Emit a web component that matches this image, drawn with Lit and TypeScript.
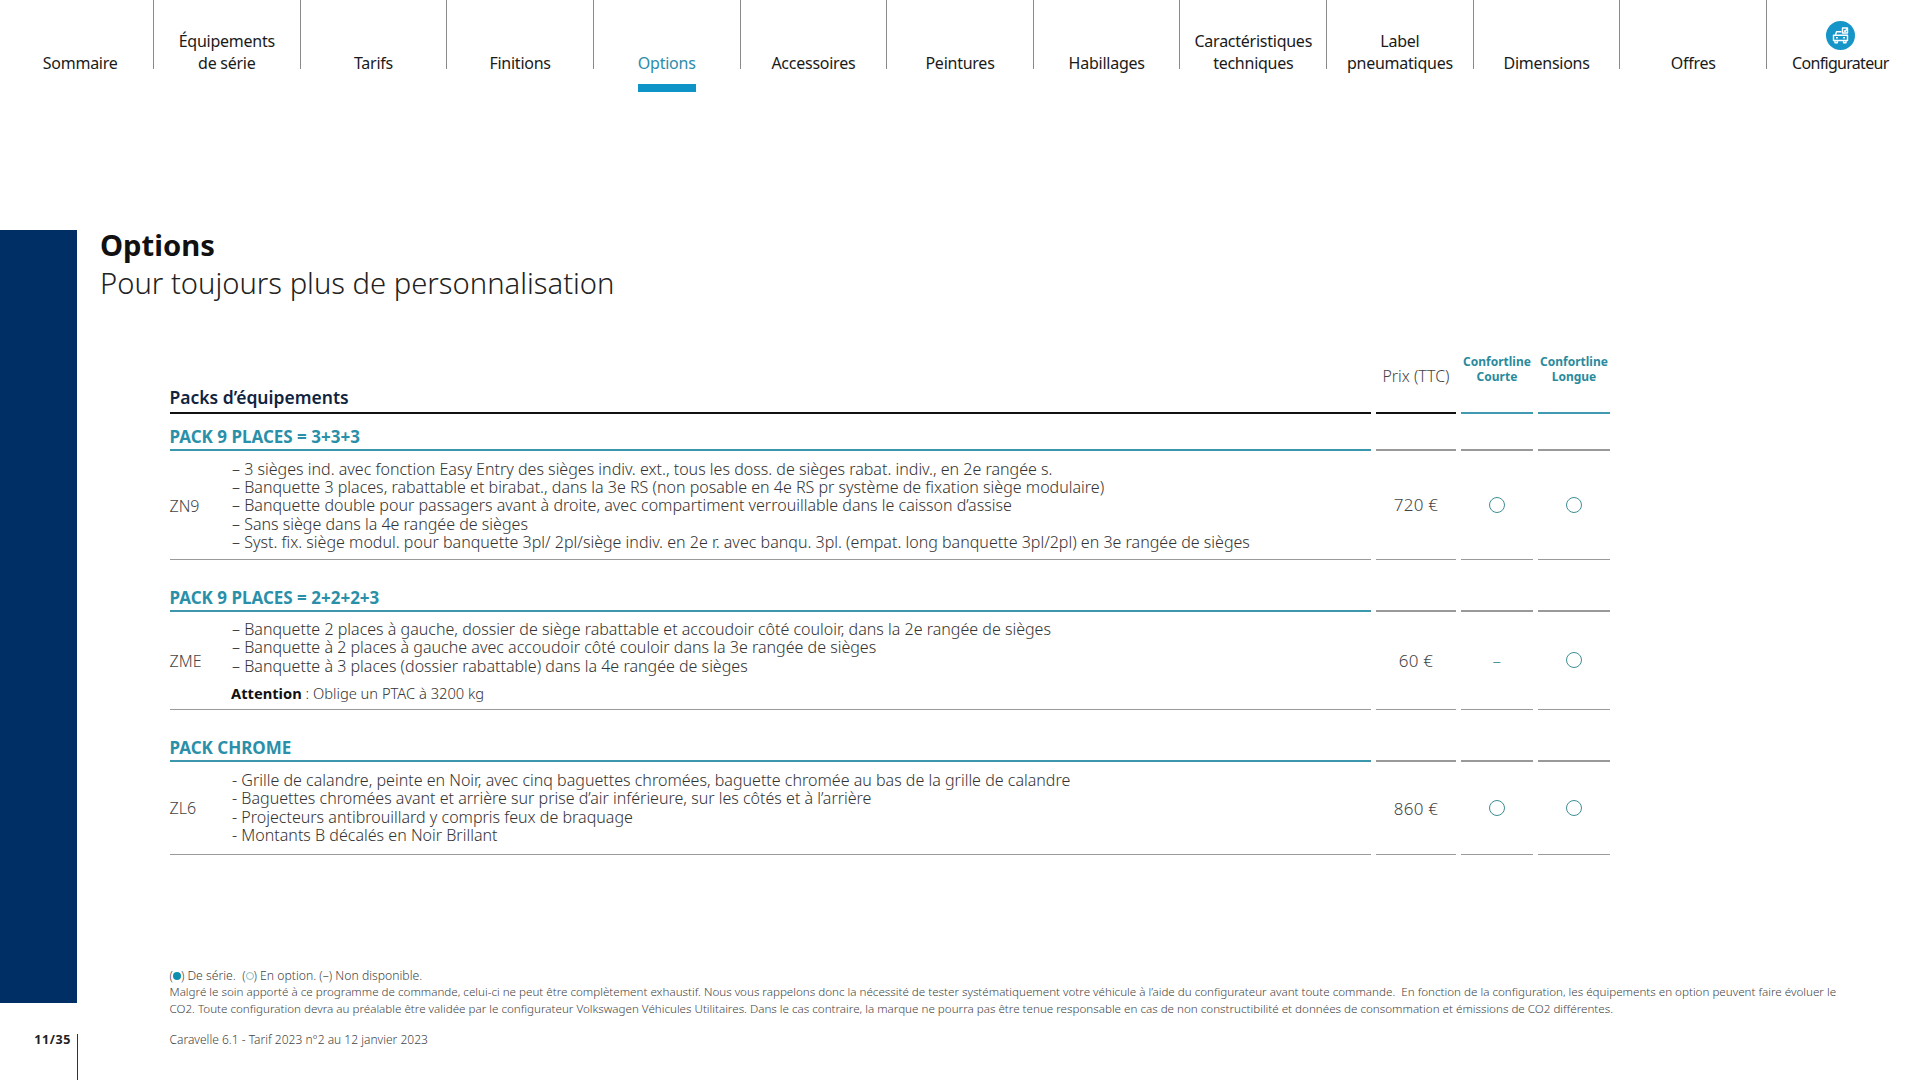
import { LitElement, html, css, nothing } from 'lit';
import { customElement } from 'lit/decorators.js';

const NAV = [
  ['Sommaire'],
  ['Équipements', 'de série'],
  ['Tarifs'],
  ['Finitions'],
  ['Options'],
  ['Accessoires'],
  ['Peintures'],
  ['Habillages'],
  ['Caractéristiques', 'techniques'],
  ['Label', 'pneumatiques'],
  ['Dimensions'],
  ['Offres'],
  ['Configurateur'],
];

type Pack = {
  title: string;
  code: string;
  price: string;
  courte: boolean;
  lines: string[];
  attention?: string;
};

const PACKS: Pack[] = [
  {
    title: 'PACK 9 PLACES = 3+3+3',
    code: 'ZN9',
    price: '720 €',
    courte: true,
    lines: [
      '– 3 sièges ind. avec fonction Easy Entry des sièges indiv. ext., tous les doss. de sièges rabat. indiv., en 2e rangée s.',
      '– Banquette 3 places, rabattable et birabat., dans la 3e RS (non posable en 4e RS pr système de fixation siège modulaire)',
      '– Banquette double pour passagers avant à droite, avec compartiment verrouillable dans le caisson d’assise',
      '– Sans siège dans la 4e rangée de sièges',
      '– Syst. fix. siège modul. pour banquette 3pl/ 2pl/siège indiv. en 2e r. avec banqu. 3pl. (empat. long banquette 3pl/2pl) en 3e rangée de sièges',
    ],
  },
  {
    title: 'PACK 9 PLACES = 2+2+2+3',
    code: 'ZME',
    price: '60 €',
    courte: false,
    lines: [
      '– Banquette 2 places à gauche, dossier de siège rabattable et accoudoir côté couloir, dans la 2e rangée de sièges',
      '– Banquette à 2 places à gauche avec accoudoir côté couloir dans la 3e rangée de sièges',
      '– Banquette à 3 places (dossier rabattable) dans la 4e rangée de sièges',
    ],
    attention: 'Oblige un PTAC à 3200 kg',
  },
  {
    title: 'PACK CHROME',
    code: 'ZL6',
    price: '860 €',
    courte: true,
    lines: [
      '- Grille de calandre, peinte en Noir, avec cinq baguettes chromées, baguette chromée au bas de la grille de calandre',
      '- Baguettes chromées avant et arrière sur prise d’air inférieure, sur les côtés et à l’arrière',
      '- Projecteurs antibrouillard y compris feux de braquage',
      '- Montants B décalés en Noir Brillant',
    ],
  },
];

@customElement('app-root')
export class AppRoot extends LitElement {
  static styles = css`
    :host {
      display: block;
      width: 1920px;
      height: 1080px;
      overflow: hidden;
      background: #fff;
      color: #333;
      font-family: 'Noto Sans', sans-serif;
      font-weight: 300;
    }

    .page {
      display: grid;
      grid-template-columns: 77px 1fr;
      grid-template-rows: 230px 773px 77px;
    }

    nav {
      grid-column: 1 / 3;
      display: grid;
      grid-template-columns: repeat(13, 146.65px);
      align-items: start;
      padding-left: 7.35px;
    }

    .item {
      height: 69px;
      border-right: 1px solid #8a8a8a;
      display: flex;
      flex-direction: column;
      align-items: center;
      justify-content: flex-end;
      font-size: 16px;
      letter-spacing: -0.25px;
      font-weight: 400;
      line-height: 21.5px;
      color: #1a1a1a;
      text-align: center;
      white-space: nowrap;
    }

    .item:last-child {
      border-right: none;
      letter-spacing: -0.7px;
    }

    .label {
      position: relative;
      margin-bottom: -5px;
    }

    .active {
      color: #2b8cab;
    }

    .active .label::after {
      content: '';
      position: absolute;
      left: 0;
      right: 0;
      top: calc(100% + 9.5px);
      height: 8px;
      background: #0f94c8;
    }

    .cfg-icon {
      width: 29px;
      height: 29px;
      margin-bottom: 3px;
      display: block;
    }

    .bar {
      background: #002f65;
    }

    .content {
      padding-left: 23px;
      position: relative;
    }

    h1 {
      margin: 0 0 4px;
      font-size: 29.2px;
      line-height: 30px;
      font-weight: 700;
      color: #111;
    }

    h2 {
      margin: 0;
      font-size: 29.2px;
      line-height: 38px;
      font-weight: 300;
      color: #222;
    }

    .table {
      margin-top: 38px;
      margin-left: 69.5px;
    }

    .row {
      display: grid;
      grid-template-columns: 1201.5px 80px 72px 72px;
      column-gap: 5px;
    }

    .head {
      height: 74px;
    }

    .head > div {
      border-bottom: 2px solid #111;
      display: flex;
      align-items: center;
      justify-content: center;
      box-sizing: border-box;
      text-align: center;
    }

    .head .packs {
      justify-content: flex-start;
      align-items: flex-end;
      padding-bottom: 3px;
      font-size: 17.5px;
      font-weight: 600;
      color: #10243f;
    }

    .head .prix {
      font-size: 15.9px;
      color: #444;
    }

    .head .version {
      border-bottom-color: #3f9ab2;
      color: #2a8a9c;
      font-size: 12px;
      line-height: 15.5px;
      font-weight: 700;
      padding-bottom: 14px;
    }

    .sec-title > div {
      height: 37px;
      box-sizing: border-box;
      border-bottom: 2px solid #999;
    }

    .sec-title .name {
      display: flex;
      align-items: flex-end;
      padding-bottom: 2px;
      border-bottom-color: #3c97ad;
      color: #2a8fa8;
      font-size: 17px;
      font-weight: 700;
      line-height: 20px;
    }

    .detail {
      margin-bottom: 15px;
    }

    .detail > div {
      border-bottom: 1.5px solid #9a9a9a;
      display: flex;
      align-items: center;
      justify-content: center;
      font-size: 17px;
      letter-spacing: 0.3px;
      color: #444;
    }

    .detail .main {
      justify-content: flex-start;
      padding: 8.5px 0 7px;
      letter-spacing: 0;
    }

    .detail:last-child .main {
      padding-bottom: 9.5px;
    }

    .code {
      width: 62.5px;
      flex: none;
      font-size: 16px;
      color: #444;
    }

    .lines {
      line-height: 18.4px;
      font-size: 16.05px;
      color: #333;
      white-space: nowrap;
    }

    .attention {
      margin-top: 9px;
      margin-left: -1px;
      font-size: 14.7px;
      line-height: 18px;
    }

    .attention b {
      font-weight: 700;
      color: #111;
    }

    .ring {
      width: 16px;
      height: 16px;
      box-sizing: border-box;
      border: 1.5px solid #3f8f94;
      border-radius: 50%;
    }

    .dash {
      color: #3f8f94;
    }

    .legal {
      position: absolute;
      left: 92.5px;
      top: 737.5px;
      font-size: 11.63px;
      line-height: 16.8px;
      white-space: nowrap;
      color: #444;
    }

    .legend {
      font-size: 12.2px;
    }

    .dot,
    .mini {
      display: inline-block;
      width: 8px;
      height: 8px;
      border-radius: 50%;
      box-sizing: border-box;
      vertical-align: 0;
    }

    .dot {
      background: #0f8fae;
    }

    .mini {
      border: 1px solid #8fbcbc;
    }

    .pageno {
      height: 46px;
      margin-top: 31px;
      margin-right: -1px;
      border-right: 1.5px solid #333;
      box-sizing: border-box;
      padding-right: 6px;
      text-align: right;
      font-size: 12.5px;
      font-weight: 700;
      letter-spacing: 0.6px;
      line-height: 12px;
      color: #222;
    }

    .source {
      padding: 28px 0 0 92.5px;
      font-size: 12px;
      line-height: 18px;
      color: #444;
    }
  `;

  private renderNav() {
    return NAV.map(
      (lines) => html`
        <div class="item ${lines[0] === 'Options' ? 'active' : ''}">
          ${lines[0] === 'Configurateur'
            ? html`<svg class="cfg-icon" viewBox="0 0 29 29">
                <circle cx="14.5" cy="14.5" r="14.5" fill="#1695c9" />
                <g fill="none" stroke="#fff" stroke-width="1.4" stroke-linejoin="round">
                  <path d="M9.5 14l1-3.2h5" />
                  <path d="M7.5 14.2h14v5.3h-14z" />
                  <path d="M9 19.5v2.2h2.4v-2.2M17.6 19.5v2.2H20v-2.2" />
                  <path d="M10 16.8h1.8M17.2 16.8H19" />
                  <path d="M16.5 7h5v5h-5z" />
                  <path d="M18 9.5l1 1 2.4-3" />
                </g>
              </svg>`
            : nothing}
          <div class="label">${lines.map((l) => html`<div>${l}</div>`)}</div>
        </div>
      `,
    );
  }

  private renderPack(p: Pack) {
    return html`
      <div class="row sec-title">
        <div class="name">${p.title}</div>
        <div></div>
        <div></div>
        <div></div>
      </div>
      <div class="row detail">
        <div class="main">
          <div class="code">${p.code}</div>
          <div class="lines">
            ${p.lines.map((l) => html`<div>${l}</div>`)}
            ${p.attention
              ? html`<div class="attention"><b>Attention</b> : ${p.attention}</div>`
              : nothing}
          </div>
        </div>
        <div>${p.price}</div>
        <div>${p.courte ? html`<div class="ring"></div>` : html`<span class="dash">–</span>`}</div>
        <div><div class="ring"></div></div>
      </div>
    `;
  }

  render() {
    return html`
      <div class="page">
        <nav>${this.renderNav()}</nav>
        <div class="bar"></div>
        <div class="content">
          <h1>Options</h1>
          <h2>Pour toujours plus de personnalisation</h2>
          <div class="table">
            <div class="row head">
              <div class="packs">Packs d’équipements</div>
              <div class="prix">Prix (TTC)</div>
              <div class="version">Confortline<br />Courte</div>
              <div class="version">Confortline<br />Longue</div>
            </div>
            ${PACKS.map((p) => this.renderPack(p))}
          </div>
          <div class="legal">
            <div class="legend">(<span class="dot"></span>) De série.&nbsp; (<span class="mini"></span>) En option. (–) Non disponible.</div>
            <div>Malgré le soin apporté à ce programme de commande, celui-ci ne peut être complètement exhaustif. Nous vous rappelons donc la nécessité de tester systématiquement votre véhicule à l’aide du configurateur avant toute commande.&nbsp; En fonction de la configuration, les équipements en option peuvent faire évoluer le</div>
            <div>CO2. Toute configuration devra au préalable être validée par le configurateur Volkswagen Véhicules Utilitaires. Dans le cas contraire, la marque ne pourra pas être tenue responsable en cas de non constructibilité et données de consommation et émissions de CO2 différentes.</div>
          </div>
        </div>
        <div class="pageno">11/35</div>
        <div class="source">Caravelle 6.1 - Tarif 2023 n°2 au 12 janvier 2023</div>
      </div>
    `;
  }
}
